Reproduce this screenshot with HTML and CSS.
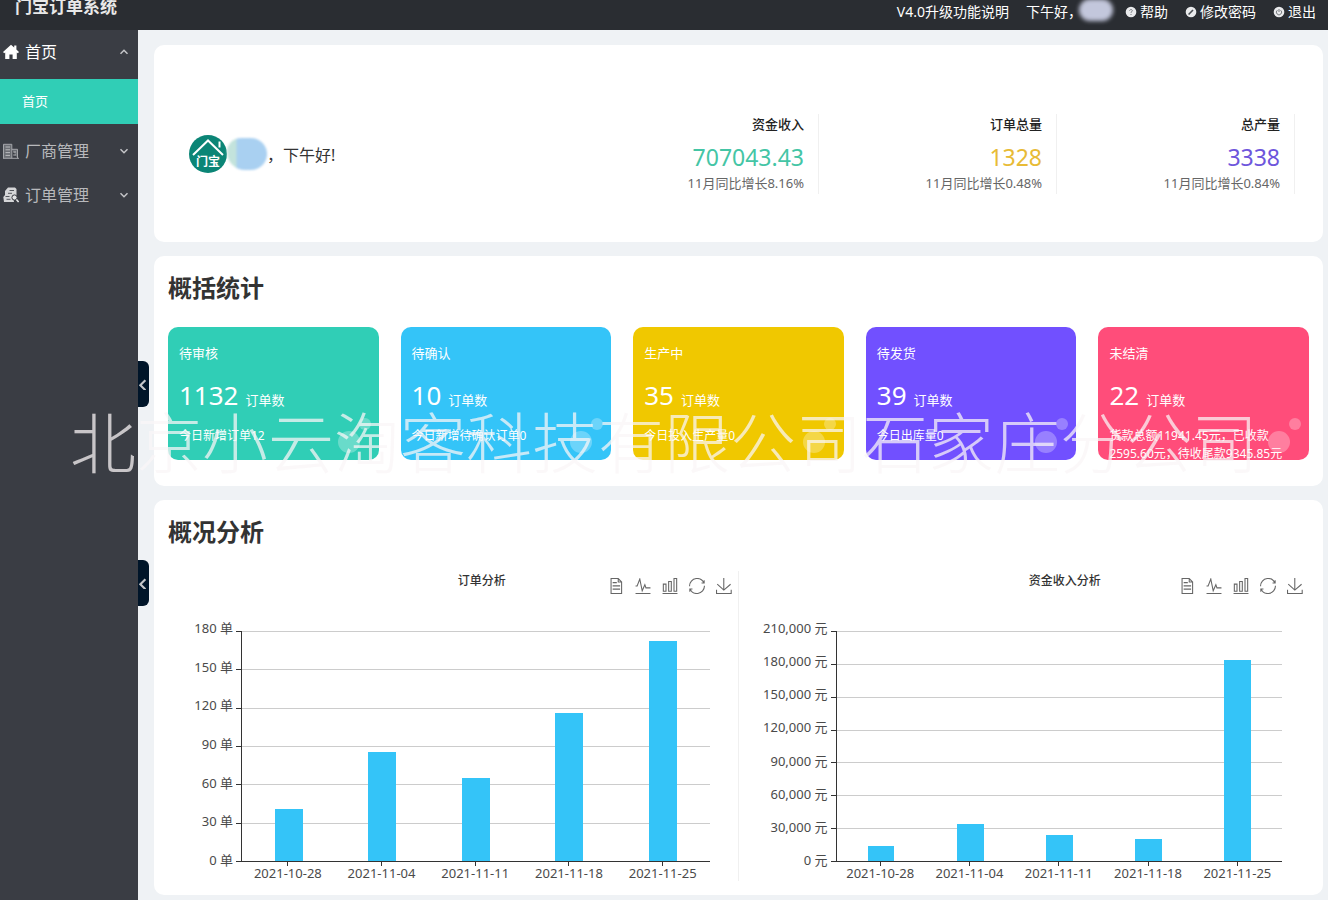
FILE: index.html
```html
<!DOCTYPE html>
<html lang="zh-CN">
<head>
<meta charset="utf-8">
<meta name="viewport" content="width=device-width, initial-scale=1">
<title>门宝订单系统</title>
<link rel="stylesheet" href="styles.css">
</head>
<body>
<svg class="sprite" aria-hidden="true">
  <symbol id="i-data" viewBox="0 0 60 60"><path d="M17.5,17.3H33M45.4,29.5h-28M11.5,2v56H51V14.8L38.4,2H11.5zM38.4,2.2v12.7H51M45.4,41.7h-28"/></symbol>
  <symbol id="i-line" viewBox="0 0 60 60"><path d="M2,30h6l10-26l9,44l10-23l4,12h17M2,58h56"/></symbol>
  <symbol id="i-bar" viewBox="0 0 60 60"><path d="M5,22.9h10V50h-10V22.9zM24.9,13h10v37h-10V13zM45,2h10v48h-10V2zM2,58h56"/></symbol>
  <symbol id="i-restore" viewBox="0 0 60 60"><path d="M47,18.9h9.8V8.7M56.3,20.1C52.1,9,40.5,0.6,26.8,2.1C12.6,3.7,1.6,16.2,2.1,30.6M13,41.1H3.1v10.2M3.7,39.9c4.2,11.1,15.8,19.5,29.5,18c14.2-1.6,25.2-14.1,24.7-28.5"/></symbol>
  <symbol id="i-save" viewBox="0 0 60 60"><path d="M4.7,22.9L29.3,45.5L54.7,23.4M2,43.6L2,58L57,58L57,43.6M29.2,45.1L29.2,0"/></symbol>
  <symbol id="i-chev" viewBox="0 0 10 10"><path d="M1.5 3.2 5 6.7 8.5 3.2"/></symbol>
</svg>

<header class="topbar">
  <div class="brand">门宝订单系统</div>
  <nav class="topnav" aria-label="用户">
    <a href="#version">V4.0升级功能说明</a>
    <span class="greeting">下午好，<span class="name-mask"></span></span>
    <a href="#help"><svg class="dot" viewBox="0 0 12 12"><circle cx="6" cy="6" r="5.3" fill="#e9eaec"/><path d="M4.6 4.7c.2-1.7 2.9-1.5 2.7.1-.1.8-1.3.9-1.3 2M6 8v1" fill="none" stroke="#777b80"/></svg>帮助</a>
    <a href="#password"><svg class="dot" viewBox="0 0 12 12"><circle cx="6" cy="6" r="5.3" fill="#e9eaec"/><path d="M3.6 8.5 8 4" stroke="#4a4e54" stroke-width="1.6"/></svg>修改密码</a>
    <a href="#logout"><svg class="dot" viewBox="0 0 12 12"><circle cx="6" cy="6" r="5.3" fill="#e9eaec"/><path d="M4.4 4.2a2.6 2.6 0 1 0 3.2 0M6 3v3" fill="none" stroke="#777b80"/></svg>退出</a>
  </nav>
</header>

<div class="shell">
  <nav class="sidebar" aria-label="主菜单">
    <button class="menu menu-open" type="button" aria-expanded="true">
      <svg class="menu-icon" viewBox="0 0 16 16"><path d="M8 .8 0 8l1.2 1.2 1-.8V15h4.2v-4.4h3.2V15h4.2V8.400l1 .8L16 8l-2.600-2.400V1.600h-2.200v2z" fill="#fff"/></svg>
      <span>首页</span>
      <svg class="chev chev-up"><use href="#i-chev"/></svg>
    </button>
    <a class="submenu" href="#home" aria-current="page">首页</a>
    <button class="menu" type="button" aria-expanded="false">
      <svg class="menu-icon" viewBox="0 0 16 16"><path d="M.5 15.300V1.300h8.300v14M8.800 6.300h5.700v9M0 15.300h16" fill="#6b6e74" stroke="#a4a6aa"/><path d="M2.500 4h4.500M2.500 6.800h4.500M2.500 9.600h4.500M2.500 12.400h4.500M10.300 9h2.700M10.300 12h2.700" stroke="#b9babd"/></svg>
      <span>厂商管理</span>
      <svg class="chev"><use href="#i-chev"/></svg>
    </button>
    <button class="menu" type="button" aria-expanded="false">
      <svg class="menu-icon" viewBox="0 0 16 16"><path d="M5 .5h7l1.500 1.500V9l-3 2 .5 4H1L.3 10 2 8V4z" fill="#d5d6d8"/><path d="M6.500 3.500h4.500M5 6.300h4M2.500 9.500h4M3.500 12.300h4" stroke="#55585e"/><circle cx="11.500" cy="10.500" r="2.600" fill="#e4e5e6" stroke="#3a3d44"/><path d="m13.400 12.500 2.200 2.500" stroke="#e4e5e6" stroke-width="1.600"/></svg>
      <span>订单管理</span>
      <svg class="chev"><use href="#i-chev"/></svg>
    </button>
  </nav>

  <main class="content">
    <button class="handle handle-upper" type="button" aria-label="收起菜单"><svg class="chev chev-left"><use href="#i-chev"/></svg></button>
    <button class="handle handle-lower" type="button" aria-label="收起面板"><svg class="chev chev-left"><use href="#i-chev"/></svg></button>

    <section class="panel welcome">
      <div class="profile">
        <svg class="avatar" viewBox="0 0 38 38" role="img" aria-label="门宝">
          <circle cx="19" cy="19" r="19" fill="#0b8576"/>
          <path d="M4 20 19 5.500l15 14.500" fill="none" stroke="#fff" stroke-width="2"/>
          <path d="M30.500 6.500v6" stroke="#fff" stroke-width="2"/>
          <text class="avatar-text" x="19" y="31" text-anchor="middle">门宝</text>
        </svg>
        <span class="user-mask"></span>
        <p>，下午好!</p>
      </div>
      <dl class="totals">
        <div class="total"><dt>资金收入</dt><dd class="figure teal">707043.43</dd><dd class="trend">11月同比增长8.16%</dd></div>
        <div class="total"><dt>订单总量</dt><dd class="figure amber">1328</dd><dd class="trend">11月同比增长0.48%</dd></div>
        <div class="total"><dt>总产量</dt><dd class="figure violet">3338</dd><dd class="trend">11月同比增长0.84%</dd></div>
      </dl>
    </section>

    <section class="panel summary">
      <h2>概括统计</h2>
      <div class="cards">
        <article class="card bg-green"><h3>待审核</h3><p class="count"><strong>1132</strong>订单数</p><p class="note">今日新增订单12</p></article>
        <article class="card bg-blue"><h3>待确认</h3><p class="count"><strong>10</strong>订单数</p><p class="note">今日新增待确认订单0</p></article>
        <article class="card bg-yellow"><h3>生产中</h3><p class="count"><strong>35</strong>订单数</p><p class="note">今日投入生产量0</p></article>
        <article class="card bg-purple"><h3>待发货</h3><p class="count"><strong>39</strong>订单数</p><p class="note">今日出库量0</p></article>
        <article class="card bg-pink"><h3>未结清</h3><p class="count"><strong>22</strong>订单数</p><p class="note">货款总额11941.45元，已收款2595.60元，待收尾款9345.85元</p></article>
      </div>
    </section>

    <section class="panel analysis">
      <h2>概况分析</h2>
      <div class="charts">
        <figure class="chart chart-orders">
          <div class="chart-head">
            <figcaption>订单分析</figcaption>
            <div class="tools">
              <button type="button" aria-label="数据视图"><svg><use href="#i-data"/></svg></button>
              <button type="button" aria-label="折线图"><svg><use href="#i-line"/></svg></button>
              <button type="button" aria-label="柱状图"><svg><use href="#i-bar"/></svg></button>
              <button type="button" aria-label="还原"><svg><use href="#i-restore"/></svg></button>
              <button type="button" aria-label="下载"><svg><use href="#i-save"/></svg></button>
            </div>
          </div>
          <div class="plot">
            <ul class="ylabels"><li>180 单</li><li>150 单</li><li>120 单</li><li>90 单</li><li>60 单</li><li>30 单</li><li>0 单</li></ul>
            <div class="lines"><i></i><i></i><i></i><i></i><i></i><i></i><i></i></div>
            <div class="bars">
              <div class="slot"><div class="bar" style="height:22.6%"></div></div>
              <div class="slot"><div class="bar" style="height:47.2%"></div></div>
              <div class="slot"><div class="bar" style="height:36.1%"></div></div>
              <div class="slot"><div class="bar" style="height:64.4%"></div></div>
              <div class="slot"><div class="bar" style="height:95.6%"></div></div>
            </div>
            <ul class="xlabels"><li>2021-10-28</li><li>2021-11-04</li><li>2021-11-11</li><li>2021-11-18</li><li>2021-11-25</li></ul>
          </div>
        </figure>
        <figure class="chart chart-income">
          <div class="chart-head">
            <figcaption>资金收入分析</figcaption>
            <div class="tools">
              <button type="button" aria-label="数据视图"><svg><use href="#i-data"/></svg></button>
              <button type="button" aria-label="折线图"><svg><use href="#i-line"/></svg></button>
              <button type="button" aria-label="柱状图"><svg><use href="#i-bar"/></svg></button>
              <button type="button" aria-label="还原"><svg><use href="#i-restore"/></svg></button>
              <button type="button" aria-label="下载"><svg><use href="#i-save"/></svg></button>
            </div>
          </div>
          <div class="plot">
            <ul class="ylabels"><li>210,000 元</li><li>180,000 元</li><li>150,000 元</li><li>120,000 元</li><li>90,000 元</li><li>60,000 元</li><li>30,000 元</li><li>0 元</li></ul>
            <div class="lines"><i></i><i></i><i></i><i></i><i></i><i></i><i></i><i></i></div>
            <div class="bars">
              <div class="slot"><div class="bar" style="height:6.5%"></div></div>
              <div class="slot"><div class="bar" style="height:16.1%"></div></div>
              <div class="slot"><div class="bar" style="height:11.5%"></div></div>
              <div class="slot"><div class="bar" style="height:9.5%"></div></div>
              <div class="slot"><div class="bar" style="height:87.2%"></div></div>
            </div>
            <ul class="xlabels"><li>2021-10-28</li><li>2021-11-04</li><li>2021-11-11</li><li>2021-11-18</li><li>2021-11-25</li></ul>
          </div>
        </figure>
      </div>
    </section>
  </main>
</div>
<div class="watermark">北京小云淘客科技有限公司石家庄分公司</div>
</body>
</html>
```
FILE: styles.css
```css
* { box-sizing: border-box; }

body {
  position: relative;
  display: flex;
  flex-direction: column;
  min-height: 100vh;
  margin: 0;
  overflow-x: hidden;
  background: #eff2f5;
  color: #333;
  font-family: "Noto Sans", "Noto Sans CJK SC", sans-serif;
  font-size: 13px;
}

h2, h3, p, ul, dl, dd, figure { margin: 0; padding: 0; }
ul { list-style: none; }
a { color: inherit; text-decoration: none; }
button { padding: 0; border: 0; background: none; color: inherit; font: inherit; cursor: pointer; }
.sprite { position: absolute; width: 0; height: 0; }

.topbar {
  display: flex;
  justify-content: space-between;
  height: 30px;
  padding: 0 12px 0 15px;
  overflow: hidden;
  background: #2a2d32;
  color: #fff;
}
.brand { color: #e8e8e8; font-size: 17px; font-weight: 700; line-height: 14px; }
.topnav { display: flex; gap: 17px; font-size: 14px; line-height: 24px; }
.topnav a, .greeting { display: flex; align-items: center; height: 24px; white-space: nowrap; }
.dot { width: 12px; height: 12px; margin-right: 3px; }
.name-mask { width: 34px; height: 22px; margin: 0 -5px 4px -3px; border-radius: 12px; background: #c3c7dc; filter: blur(2px); }

.shell { display: flex; flex: 1; }
.sidebar { flex: 0 0 138px; background: #3a3d44; color: #b8b9bc; }
.menu { display: flex; align-items: center; width: 100%; height: 44px; padding: 0 9px 0 3px; font-size: 16px; text-align: left; }
.menu span { flex: 1; margin-left: 6px; padding-bottom: 2px; }
.menu-open { color: #fff; }
.menu-icon { width: 16px; height: 16px; }
.submenu { display: block; height: 45px; margin: 5px 0; padding-left: 22px; background: #30ceb6; color: #fff; line-height: 44px; }
.chev { flex: none; width: 10px; height: 10px; fill: none; stroke: #c4c5c8; stroke-width: 1.5; }
.chev-up { transform: rotate(180deg); }
.chev-left { width: 12px; height: 12px; transform: rotate(90deg); }
.chev-left use { transform: scale(1.2); }

.content { position: relative; display: flex; flex: 1; flex-direction: column; gap: 14px; min-width: 0; padding: 15px 5px 5px 16px; }
.handle { position: absolute; left: 0; display: flex; align-items: center; justify-content: center; width: 11px; height: 46px; border-radius: 0 6px 6px 0; background: #001529; }
.handle-upper { top: 331px; }
.handle-lower { top: 530px; }

.panel { padding: 14px; border-radius: 10px; background: #fff; }
.panel h2 { font-size: 24px; line-height: 36px; }

.welcome { display: flex; align-items: center; justify-content: space-between; padding: 69px 28px 48px 35px; }
.profile { display: flex; align-items: center; font-size: 16px; }
.avatar { width: 38px; height: 38px; }
.avatar-text { fill: #fff; font-size: 12px; font-weight: 700; }
.user-mask { width: 40px; height: 32px; border-radius: 14px 16px 16px 18px; background: linear-gradient(to right, #c3e3dc 9px, #a9d0f1 10px); filter: blur(1px); }
.totals { display: flex; }
.total { width: 238px; height: 80px; padding-right: 14px; border-right: 1px solid #f0f0f0; text-align: right; }
.total dt { font-weight: 500; line-height: 20px; color: #222; }
.figure { margin-top: 8px; font-size: 23px; line-height: 30px; }
.trend { color: #666; line-height: 22px; }
.teal { color: #44c5a5; }
.amber { color: #e8bb36; }
.violet { color: #6e56dc; }

.summary { padding-bottom: 26px; }
.cards { display: grid; grid-template-columns: repeat(5, 1fr); gap: 22px; margin-top: 21px; }
.card { position: relative; height: 133px; padding: 16px 11px 0; overflow: hidden; border-radius: 10px; color: #fff; }
.card::before, .card::after { content: ""; position: absolute; border-radius: 50%; background: rgba(255, 255, 255, .28); }
.card::before { right: 19px; bottom: 7px; width: 22px; height: 22px; }
.card::after { right: 8px; bottom: 30px; width: 12px; height: 12px; }
.card h3 { font-size: 13px; font-weight: 400; line-height: 20px; }
.count { display: flex; align-items: baseline; gap: 7px; margin-top: 14px; line-height: 36px; }
.count strong { font-size: 26px; font-weight: 400; }
.note { margin-top: 9px; font-size: 12px; line-height: 18px; }
.bg-green { background: #30ceb6; }
.bg-blue { background: #34c4f8; }
.bg-yellow { background: #f0c800; }
.bg-purple { background: #7150ff; }
.bg-pink { background: #ff4d7a; }

.analysis { flex: 1; }
.charts { display: grid; grid-template-columns: 1fr 1fr; margin-top: 21px; }
.chart { min-width: 0; }
.chart-orders { --axis: 68px; --end: 28px; --head: 64px; border-right: 1px solid #f0f0f0; }
.chart-income { --axis: 92px; --end: 27px; --head: 88px; }
.chart-head { display: grid; grid-template-columns: 1fr auto 1fr; height: 60px; padding: 0 6px 0 var(--head); }
.chart figcaption { grid-column: 2; font-size: 12px; font-weight: 500; line-height: 20px; }
.tools { display: flex; justify-content: flex-end; gap: 11px; height: 16px; margin-top: 7px; }
.tools button { width: 16px; height: 16px; }
.tools svg { display: block; width: 16px; height: 16px; fill: none; stroke: #666; stroke-width: 4; }
.plot { display: grid; grid-template-columns: var(--axis) 1fr; grid-template-rows: 231px auto; padding-right: var(--end); }
.ylabels { display: flex; flex-direction: column; justify-content: space-between; margin: -12px 3px -8px 0; color: #4a4a4a; line-height: 19px; text-align: right; }
.lines { grid-area: 1 / 2; display: flex; flex-direction: column; justify-content: space-between; }
.lines i { height: 1px; background: linear-gradient(to right, #333 5px, #ccc 5px); }
.bars { z-index: 1; grid-area: 1 / 2; display: flex; margin-left: 5px; border: solid #333; border-width: 0 0 1px 1px; }
.slot { display: flex; flex: 1; align-items: flex-end; justify-content: center; }
.bar { width: 30%; background: #34c4f8; }
.xlabels { grid-column: 2; display: flex; margin-left: 5px; color: #4a4a4a; line-height: 15px; }
.xlabels li { flex: 1; text-align: center; white-space: nowrap; }
.xlabels li::before { content: ""; display: block; width: 1px; height: 4px; margin: 0 auto; background: #333; }

.watermark {
  position: absolute;
  z-index: 5;
  top: 402px;
  left: 70px;
  color: rgba(250, 246, 247, .74);
  font-size: 66px;
  font-weight: 300;
  line-height: 80px;
  white-space: nowrap;
  pointer-events: none;
}
```
